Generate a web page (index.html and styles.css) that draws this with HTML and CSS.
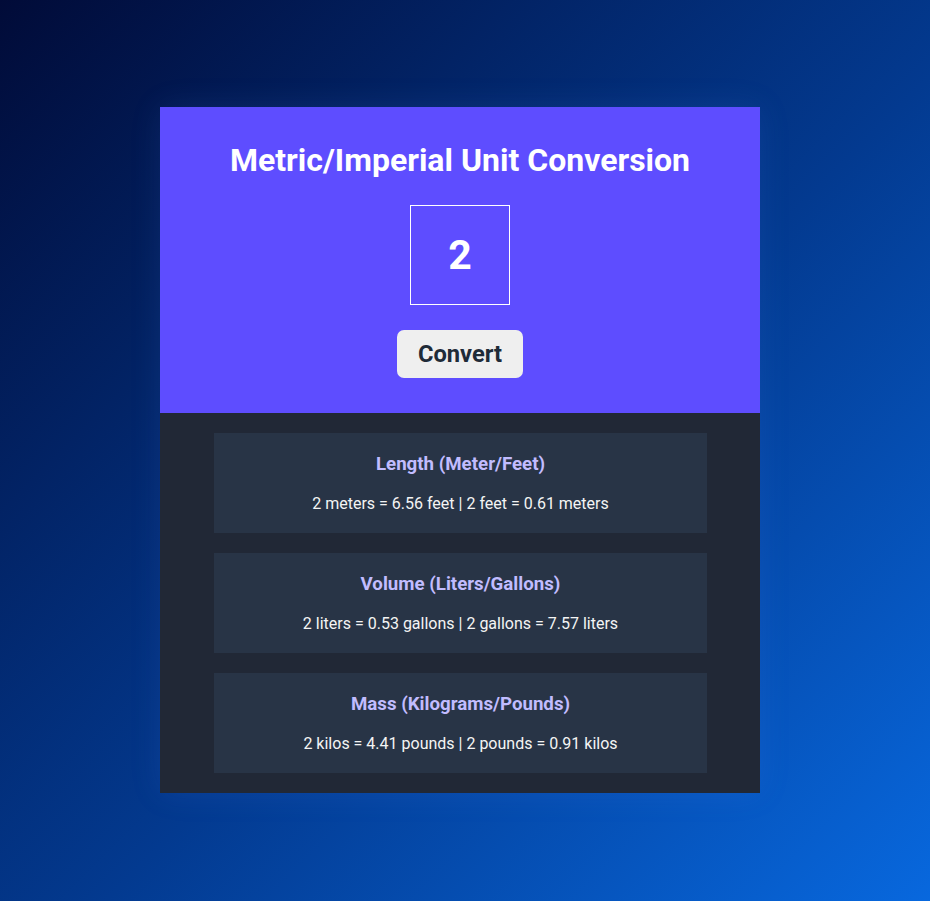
FILE: index.html
```html
<!DOCTYPE html>
<html lang="en">
<head>
<meta charset="utf-8">
<title>Metric/Imperial Unit Conversion</title>
<link rel="stylesheet" href="styles.css">
</head>
<body>
<div class="page">
  <main class="card">
    <section class="top">
      <h1 class="title">Metric/Imperial Unit Conversion</h1>
      <div class="input-box">2</div>
      <button class="convert-btn">Convert</button>
    </section>
    <section class="results">
      <div class="result">
        <h2 class="result-title">Length (Meter/Feet)</h2>
        <p class="result-text">2 meters = 6.56 feet | 2 feet = 0.61 meters</p>
      </div>
      <div class="result">
        <h2 class="result-title">Volume (Liters/Gallons)</h2>
        <p class="result-text">2 liters = 0.53 gallons | 2 gallons = 7.57 liters</p>
      </div>
      <div class="result">
        <h2 class="result-title">Mass (Kilograms/Pounds)</h2>
        <p class="result-text">2 kilos = 4.41 pounds | 2 pounds = 0.91 kilos</p>
      </div>
    </section>
  </main>
</div>
</body>
</html>
```
FILE: styles.css
```css
html, body {
  margin: 0;
  padding: 0;
  height: 100%;
}
body {
  font-family: Roboto, "Liberation Sans", sans-serif;
  background: linear-gradient(135deg, #010b38 0%, #033a90 55%, #0868de 100%);
  min-height: 901px;
}
.page {
  box-sizing: border-box;
  min-height: 901px;
  display: flex;
  justify-content: center;
  align-items: flex-start;
  padding: 107px 10px 0 0;
}
.card {
  width: 600px;
  display: flex;
  flex-direction: column;
  box-shadow: 0 0 30px rgba(90, 140, 255, 0.12);
}
.top {
  background: #5e4dff;
  display: flex;
  flex-direction: column;
  align-items: center;
  padding: 35px 0 35px;
}
.title {
  margin: 0;
  font-size: 32px;
  line-height: 37px;
  font-weight: 700;
  color: #ffffff;
}
.input-box {
  margin-top: 26px;
  box-sizing: border-box;
  width: 100px;
  height: 100px;
  border: 1px solid #ffffff;
  display: flex;
  align-items: center;
  justify-content: center;
  color: #ffffff;
  font-size: 41px;
  font-weight: 700;
}
.convert-btn {
  margin-top: 25px;
  height: 48px;
  width: 126px;
  border: none;
  border-radius: 7px;
  background: #efefef;
  color: #1f2b38;
  font-family: Roboto, "Liberation Sans", sans-serif;
  font-size: 23.7px;
  font-weight: 700;
  padding: 0;
}
.results {
  background: #212836;
  padding: 20px 53px 20px 54px;
  display: flex;
  flex-direction: column;
  gap: 20px;
}
.result {
  background: #283446;
  padding: 20px;
  text-align: center;
}
.result-title {
  margin: 0;
  font-size: 18.7px;
  line-height: 22px;
  font-weight: 700;
  color: #c1bcff;
}
.result-text {
  margin: 19px 0 0;
  font-size: 16px;
  line-height: 19px;
  color: #f4f4f4;
}
```
